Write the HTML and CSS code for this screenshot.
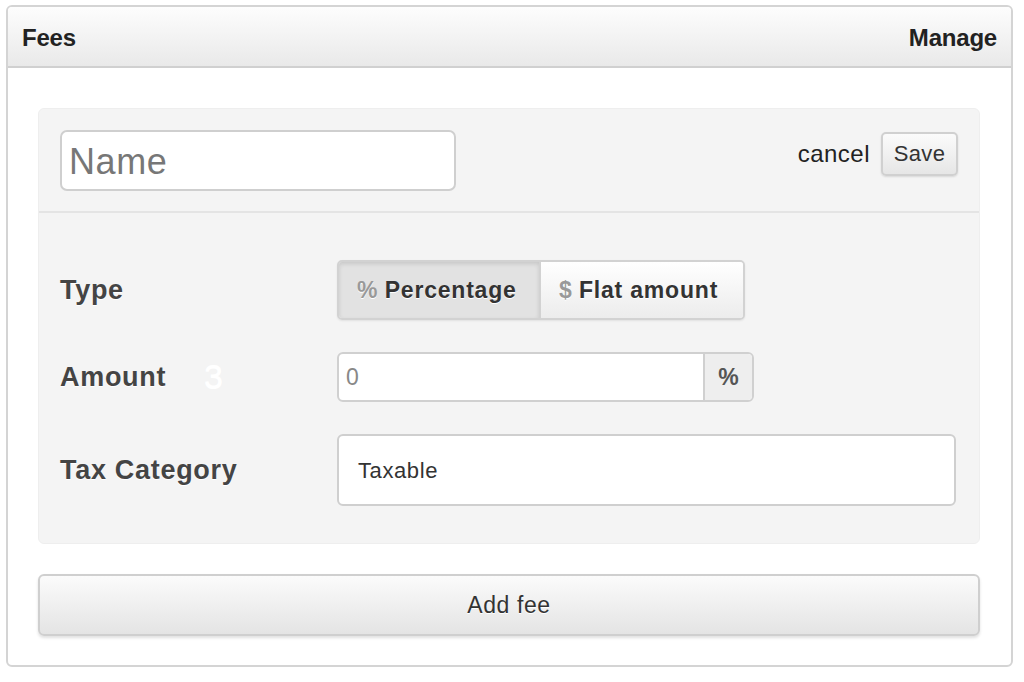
FILE: index.html
```html
<!DOCTYPE html>
<html>
<head>
<meta charset="utf-8">
<link rel="stylesheet" href="styles.css">
</head>
<body>
<div class="panel">
  <div class="panel-head">
    <span class="title">Fees</span>
    <span class="title">Manage</span>
  </div>
  <div class="panel-body">
    <div class="fee-box">
      <div class="fee-top">
        <div class="name-input">Name</div>
        <div class="actions">
          <span class="cancel">cancel</span>
          <span class="btn-save">Save</span>
        </div>
      </div>
      <div class="fee-form">
        <div class="row row-type">
          <div class="label">Type</div>
          <div class="seg">
            <div class="seg-btn active"><span><span class="sym">%</span> Percentage</span></div>
            <div class="seg-btn"><span><span class="sym">$</span> Flat amount</span></div>
          </div>
        </div>
        <div class="row row-amount">
          <div class="label">Amount <span class="ghost">3</span></div>
          <div class="amount-group">
            <div class="amount-input">0</div>
            <div class="addon">%</div>
          </div>
        </div>
        <div class="row row-tax">
          <div class="label">Tax Category</div>
          <div class="tax-select">Taxable</div>
        </div>
      </div>
    </div>
    <div class="add-btn">Add fee</div>
  </div>
</div>
</body>
</html>
```
FILE: styles.css
```css
html, body {
  margin: 0;
  padding: 0;
  background: #fff;
}
body {
  font-family: "Liberation Sans", Arial, sans-serif;
  color: #333;
  padding: 5px 11px 0 6px;
}
.panel {
  border: 2px solid #d4d4d4;
  border-radius: 6px;
  height: 662px;
  box-sizing: border-box;
  overflow: hidden;
}
.panel-head {
  height: 61px;
  box-sizing: border-box;
  border-bottom: 2px solid #d0d0d0;
  background: linear-gradient(#fdfdfd, #e9e9e9);
  display: flex;
  justify-content: space-between;
  align-items: center;
  padding: 0 14px 0 14px;
}
.title {
  font-weight: bold;
  font-size: 24px;
  color: #222;
  letter-spacing: -0.2px;
  padding-top: 2px;
}
.panel-body {
  padding: 40px 31px 0 30px;
}
.fee-box {
  background: #f4f4f4;
  border-radius: 6px;
  border: 1px solid #eeeeee;
  height: 436px;
  box-sizing: border-box;
}
.fee-top {
  height: 104px;
  box-sizing: border-box;
  border-bottom: 2px solid #e4e4e4;
  display: flex;
  justify-content: space-between;
  padding: 21px 21px 0 21px;
}
.name-input {
  width: 396px;
  height: 61px;
  box-sizing: border-box;
  border: 2px solid #cfcfcf;
  border-radius: 7px;
  background: #fff;
  font-size: 36px;
  letter-spacing: 0.6px;
  color: #777;
  padding: 9px 0 0 7px;
}
.actions {
  display: flex;
  align-items: flex-start;
  padding-top: 2px;
}
.cancel {
  font-size: 24px;
  letter-spacing: 0.5px;
  color: #222;
  margin-top: 8px;
  margin-right: 11px;
}
.btn-save {
  width: 77px;
  height: 44px;
  box-sizing: border-box;
  border: 2px solid #d0d0d0;
  border-radius: 5px;
  background: linear-gradient(#fbfbfb, #e6e6e6);
  box-shadow: 0 1px 2px rgba(0,0,0,0.12);
  font-size: 22px;
  letter-spacing: 0.4px;
  color: #333;
  text-align: center;
  line-height: 39px;
}
.fee-form {
  padding: 47px 0 0 21px;
}
.row {
  display: flex;
  align-items: center;
}
.label {
  width: 277px;
  font-weight: bold;
  font-size: 27px;
  letter-spacing: 0.7px;
  color: #444;
  position: relative;
  text-shadow: 0 1px 0 #fff;
}
.ghost {
  position: absolute;
  left: 144px;
  top: -5px;
  font-weight: normal;
  font-size: 34px;
  letter-spacing: 0;
  color: #fff;
}
.seg {
  display: flex;
  height: 60px;
  box-sizing: border-box;
  border: 2px solid #d2d2d2;
  border-radius: 5px;
  overflow: hidden;
  box-shadow: 0 1px 2px rgba(0,0,0,0.08);
}
.seg-btn {
  font-weight: bold;
  font-size: 23px;
  letter-spacing: 0.8px;
  color: #333;
  display: flex;
  align-items: center;
  width: 202px;
  box-sizing: border-box;
  padding: 0 0 0 18px;
  background: linear-gradient(#ffffff, #ececec);
  text-shadow: 0 1px 0 #fff;
}
.seg-btn.active {
  background: #e2e2e2;
  box-shadow: inset 0 2px 4px rgba(0,0,0,0.12);
  border-right: 2px solid #d2d2d2;
}
.sym {
  color: #999;
  font-weight: bold;
  letter-spacing: 0;
}
.row-amount {
  margin-top: 32px;
}
.amount-group {
  display: flex;
  height: 50px;
  width: 417px;
  box-sizing: border-box;
  border: 2px solid #d0d0d0;
  border-radius: 6px;
  overflow: hidden;
  background: #fff;
}
.amount-input {
  flex: 1;
  font-size: 23px;
  color: #888;
  padding: 10px 0 0 7px;
}
.addon {
  width: 47px;
  background: #eeeeee;
  border-left: 2px solid #d0d0d0;
  font-weight: bold;
  font-size: 23px;
  color: #555;
  text-align: center;
  line-height: 46px;
}
.row-tax {
  margin-top: 32px;
}
.tax-select {
  width: 619px;
  height: 72px;
  box-sizing: border-box;
  border: 2px solid #cfcfcf;
  border-radius: 6px;
  background: #fff;
  font-size: 22px;
  letter-spacing: 0.6px;
  color: #333;
  padding: 22px 0 0 19px;
}
.add-btn {
  margin-top: 30px;
  height: 62px;
  box-sizing: border-box;
  border: 2px solid #cfcfcf;
  border-radius: 6px;
  background: linear-gradient(#fbfbfb, #e4e4e4);
  box-shadow: 0 2px 3px rgba(0,0,0,0.12);
  font-size: 23px;
  letter-spacing: 0.6px;
  color: #333;
  text-align: center;
  line-height: 58px;
  text-shadow: 0 1px 0 #fff;
}
```
